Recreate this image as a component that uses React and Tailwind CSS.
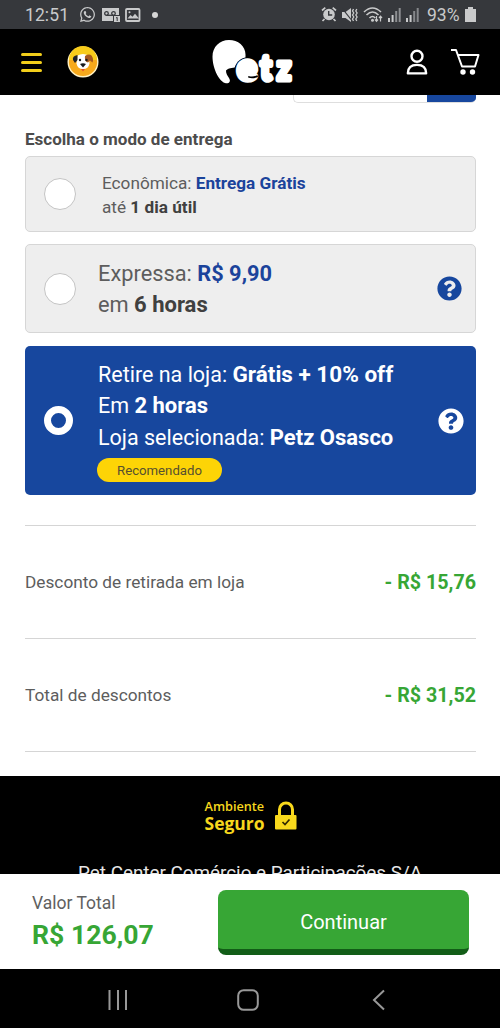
import React from 'react';
import { FaWhatsapp, FaQuestionCircle } from 'react-icons/fa';

function StatusBar() {
  return (
    <div className="flex h-[29px] shrink-0 items-center bg-[#36383c] pl-[25px] text-[#c9cacb]">
      <span className="w-[54px] pt-[2px] text-[17.5px] leading-[29px] tracking-[0.1px] whitespace-nowrap">12:51</span>
      <FaWhatsapp className="size-[17px]" />
      <svg className="ml-[6px] h-[16px] w-[18px]" viewBox="0 0 18 16">
        <path d="M0 1h17v7h-6v6H0z" fill="#c9cacb" />
        <g fill="none" stroke="#36383c" strokeWidth="1.3">
          <circle cx="4.5" cy="6.5" r="1.8" />
          <circle cx="11.5" cy="6.5" r="1.8" />
          <path d="M4.5 8.3h7" />
        </g>
        <rect x="12" y="9" width="6" height="6" fill="#c9cacb" />
        <path d="M14 11l1.2-.6V14" fill="none" stroke="#36383c" />
      </svg>
      <svg className="ml-[5px] h-[14px] w-[16px]" viewBox="0 0 16 14">
        <rect x="1" y="1" width="13.5" height="12" rx="1" fill="none" stroke="#c9cacb" strokeWidth="1.8" />
        <path d="M2.5 10.5l3-3.500 2 1.800 2.500-3 4 4.700z" fill="#c9cacb" />
        <circle cx="4.500" cy="4.300" r="1" fill="#c9cacb" />
      </svg>
      <span className="ml-[11px] size-[6px] rounded-full bg-[#d6d6d6]" />
      <svg className="ml-[163px] h-[17px] w-[16px]" viewBox="0 0 16 17">
        <circle cx="8" cy="8.500" r="5.800" fill="#c9cacb" />
        <path d="M1 4.500L4.300 1.700M15 4.500L11.700 1.700M3.500 13l-2 2M12.500 13l2 2" stroke="#c9cacb" strokeWidth="1.700" />
        <path d="M7.700 5v4h3.500" fill="none" stroke="#36383c" strokeWidth="1.400" />
      </svg>
      <svg className="ml-[5px] h-[16px] w-[16px]" viewBox="0 0 16 16">
        <path d="M0 5h3.500L9 1v14l-5.500-4H0z" fill="#c9cacb" />
        <path d="M0 1l11 14" stroke="#36383c" strokeWidth="1.200" />
        <path d="M11.500 2l-1 2 1.300 2-1.300 2 1.300 2-1.300 2 1 2M14.800 2l-1 2 1.300 2-1.300 2 1.300 2-1.300 2 1 2" fill="none" stroke="#c9cacb" strokeWidth="1.300" />
      </svg>
      <svg className="ml-[5px] h-[17px] w-[20px]" viewBox="0 0 20 17">
        <g fill="none" stroke="#c9cacb" strokeWidth="1.600">
          <path d="M1 6Q9.500-2 18 6M3.500 9Q9.500 3 15.500 9M6.500 12Q9.500 9 12.300 12" />
          <path d="M13.500 10v5M12 13.500l1.500 1.800 1.500-1.800M17.500 15.500v-5M16 12l1.500-1.800L19 12" strokeWidth="1.200" />
        </g>
        <circle cx="9.500" cy="14.300" r="1.500" fill="#c9cacb" />
      </svg>
      {[0, 1].map((signal) => (
        <svg key={signal} className="ml-[4px] h-[15px] w-[14px]" viewBox="0 0 14 15">
          <path d="M1 11h2v4H1zM4.600 8h2v7h-2z" fill="#c9cacb" />
          <path d="M8.200 4h2v11h-2zM11.700 1h2v14h-2z" fill={signal ? '#85878a' : '#8d8f92'} />
        </svg>
      ))}
      <span className="ml-[8px] w-[34px] pt-px text-[17.500px] leading-[30px] whitespace-nowrap">93%</span>
      <svg className="ml-[4px] h-[15px] w-[11px]" viewBox="0 0 11 15">
        <path d="M3 0h5v2h3v13H0V2h3z" fill="#c9cacb" />
      </svg>
    </div>
  );
}

function DogBadge() {
  return (
    <svg className="ml-[25px] size-[32px]" viewBox="0 0 32 32">
      <circle cx="16" cy="16" r="14.800" fill="#f7a91c" stroke="#fff2c4" strokeWidth="1.400" />
      <path d="M2 14a14 14 0 0128 0z" fill="#f8cc1a" />
      <path d="M10.500 9.500q5.500-3 11 0l1 8q-1 5.500-6.500 5.500t-6.500-5.500z" fill="#fff" />
      <path d="M10.500 9q-5.500 1-4.500 5l2 3 2.500-3z" fill="#20232a" />
      <path d="M18 10q4-2.500 6.500-.5 2.500 3.500 1 7l-2.500-2-2 2q-4-1-3-6.500z" fill="#a75a1e" />
      <circle cx="13" cy="14" r="1.200" fill="#17191d" />
      <circle cx="19.500" cy="14" r="1.200" fill="#17191d" />
      <path d="M13 18q3-1.500 6 0l-3 3.500z" fill="#17191d" />
      <path d="M14 23h4l-2 2.500z" fill="#e4532a" />
    </svg>
  );
}

function PetzLogo() {
  return (
    <svg className="h-[56px] w-[86px] overflow-visible" viewBox="0 -4 86 56">
      <path d="M18 2C27 2 34.500 8 34.500 16.500V27l-9 2.500c-5 .3-8 .5-10.500 3 0 3 1 4.500 3 7.500 2.500 4-.5 6-4 5C7 42.500 1.500 29 1.500 18.500 1.500 9 8.500 2 18 2z" fill="#fff" />
      <circle cx="37" cy="33" r="13.700" fill="#000" />
      <g fill="#fff" stroke="#fff" strokeLinejoin="round" strokeLinecap="round" fontFamily="Lato, sans-serif" fontWeight="900">
        <text x="27.500" y="41.300" strokeWidth="7.500" fontSize="33" textLength="17" lengthAdjust="spacingAndGlyphs">e</text>
        <text x="49.500" y="42" strokeWidth="5.500" fontSize="35" textLength="11" lengthAdjust="spacingAndGlyphs">t</text>
        <text x="66" y="42" strokeWidth="5" fontSize="34" textLength="14" lengthAdjust="spacingAndGlyphs">z</text>
      </g>
      <path d="M38 39q4 1 8-.7" fill="none" stroke="#000" strokeWidth="1.800" strokeLinecap="round" />
    </svg>
  );
}

function Header() {
  return (
    <header className="flex h-[66px] shrink-0 items-center bg-black pl-[21px]">
      <div className="flex w-[21px] flex-col gap-[5px]">
        <span className="h-[3px] rounded-xs bg-[#f2ce1b]" />
        <span className="h-[3px] rounded-xs bg-[#f2ce1b]" />
        <span className="h-[3px] rounded-xs bg-[#f2ce1b]" />
      </div>
      <DogBadge />
      <div className="ml-[112px]">
        <PetzLogo />
      </div>
      <svg className="mb-[1px] ml-[109px] h-[26px] w-[22px]" viewBox="0 0 22 27" fill="none" stroke="#fff" strokeWidth="2.500">
        <circle cx="11" cy="7.500" r="5.700" />
        <path d="M1.500 25.300q0-8.800 9.500-8.800t9.500 8.800z" strokeLinejoin="round" />
      </svg>
      <svg className="ml-[22px] h-[28px] w-[30px]" viewBox="0 0 30 28">
        <path d="M1 2h5l6 16.500h13L28.500 7H8" fill="none" stroke="#fff" strokeWidth="2" strokeLinejoin="round" />
        <circle cx="13" cy="24" r="2.700" fill="#fff" />
        <circle cx="22.500" cy="24" r="2.700" fill="#fff" />
      </svg>
    </header>
  );
}

function Radio() {
  return <span className="ml-[18px] size-[32px] shrink-0 rounded-full border border-[#c4c4c4] bg-white" />;
}

function DeliveryOptions() {
  return (
    <div className="flex flex-col">
      <div className="flex h-[76px] items-center rounded-[5px] border border-[#d6d6d6] bg-[#eeeeee]">
        <Radio />
        <div className="ml-[26px] pt-px text-[17.200px] leading-[24px] whitespace-nowrap text-[#5d5d5d]">
          <p>Econômica: <b className="text-[#1b439b]">Entrega Grátis</b></p>
          <p>até <b className="text-[#404040]">1 dia útil</b></p>
        </div>
      </div>
      <div className="mt-[12px] flex h-[89px] items-center rounded-[5px] border border-[#d6d6d6] bg-[#eeeeee]">
        <Radio />
        <div className="ml-[22px] flex-1 text-[21.800px] leading-[31px] whitespace-nowrap text-[#5d5d5d]">
          <p>Expressa: <b className="text-[#1b439b]">R$ 9,90</b></p>
          <p>em <b className="text-[22px] text-[#404040]">6 horas</b></p>
        </div>
        <FaQuestionCircle className="mr-[13px] size-[25px] text-[#17479e]" />
      </div>
      <div className="mt-[13px] flex h-[149px] items-center rounded-[5px] bg-[#17479e]">
        <span className="ml-[19px] size-[29px] shrink-0 rounded-full border-[7px] border-white" />
        <div className="ml-[25px] flex-1 text-[21.500px] leading-[31.500px] whitespace-nowrap text-white">
          <p className="h-[31.500px]">Retire na loja: <b className="text-[22.500px]">Grátis + 10% off</b></p>
          <p className="h-[31.500px]">Em <b className="text-[22px]">2 horas</b></p>
          <p className="h-[31.500px]">Loja selecionada: <b className="text-[22px]">Petz Osasco</b></p>
          <span className="mt-[5px] -ml-px flex h-[24px] w-[125px] items-center justify-center rounded-full bg-[#fdd406] text-[13.200px] leading-none text-[#56502f]">
            Recomendado
          </span>
        </div>
        <FaQuestionCircle className="mr-[12px] size-[26px] text-white" />
      </div>
    </div>
  );
}

function DiscountRow({ label, value }) {
  return (
    <div className="flex h-[113px] items-center justify-between border-t border-[#d5d5d5] pt-[2px] whitespace-nowrap">
      <span className="text-[17.250px]">{label}</span>
      <b className="text-[19.700px] text-[#37a635]">{value}</b>
    </div>
  );
}

export default function App() {
  return (
    <div className="flex h-[1028px] w-[500px] flex-col overflow-hidden bg-white font-['Roboto',sans-serif]">
      <StatusBar />
      <Header />
      <main className="h-[681px] shrink-0 pr-[24px] pl-[25px] text-[#5d5d5d]">
        <div className="ml-[268px] flex h-[8px] overflow-hidden rounded-b-[5px] border-b border-l border-[#dedede]">
          <span className="flex-1" />
          <span className="-mb-px w-[49px] bg-[#17479e]" />
        </div>
        <h2 className="mt-[24px] mb-[5px] text-[17.050px] leading-[24px] font-bold whitespace-nowrap text-[#4c4c4c]">
          Escolha o modo de entrega
        </h2>
        <DeliveryOptions />
        <div className="mt-[30px] border-b border-[#d5d5d5]">
          <DiscountRow label="Desconto de retirada em loja" value="- R$ 15,76" />
          <DiscountRow label="Total de descontos" value="- R$ 31,52" />
        </div>
      </main>
      <footer className="h-[98px] shrink-0 overflow-hidden bg-black pt-[22px]">
        <div className="flex h-[36px] justify-center gap-[9px] pl-px">
          <div className="w-[61px] font-['Open_Sans',sans-serif] whitespace-nowrap text-[#f7d71d]">
            <p className="text-[12.700px] leading-[17px] font-semibold">Ambiente</p>
            <p className="text-[17.500px] leading-[16px] font-bold">Seguro</p>
          </div>
          <svg className="mt-[3px] h-[29px] w-[22px]" viewBox="0 0 22 29">
            <path d="M4.500 15V8.500a6.500 6.500 0 0113 0V15" fill="none" stroke="#f9d91c" strokeWidth="3" />
            <rect x="0" y="14" width="21.500" height="14.500" rx="1" fill="#f9d91c" />
            <path d="M7.500 21l2.500 2.500 4.500-5" fill="none" stroke="#302800" strokeWidth="1.700" />
          </svg>
        </div>
        <p className="mt-[27px] text-center text-[18.850px] leading-[24px] whitespace-nowrap text-[#e8e8e8]">
          Pet Center Comércio e Participações S/A
        </p>
      </footer>
      <section className="flex h-[95px] shrink-0 bg-white pt-[16px] pl-[32px]">
        <div className="w-[186px] whitespace-nowrap">
          <p className="text-[17.500px] leading-[26px] text-[#606060]">Valor Total</p>
          <p className="mt-[3px] text-[26.600px] leading-[32px] font-bold text-[#37a635]">R$ 126,07</p>
        </div>
        <button className="h-[65px] w-[251px] rounded-[8px] border-b-[6px] border-[#125d17] bg-[#37a635] pt-[5px] text-[20px] text-white">
          Continuar
        </button>
      </section>
      <nav className="flex h-[59px] shrink-0 items-start bg-black pt-[20px] pl-[108px]">
        <svg className="h-[22px] w-[20px]" viewBox="0 0 20 22" stroke="#989898" strokeWidth="2">
          <path d="M1.500 1v20M10 1v20M18 1v20" />
        </svg>
        <svg className="ml-[109px] size-[22px]" viewBox="0 0 22 22">
          <rect x="1.200" y="1.200" width="19.600" height="19.600" rx="5.500" fill="none" stroke="#989898" strokeWidth="2" />
        </svg>
        <svg className="ml-[113px] h-[22px] w-[13px]" viewBox="0 0 13 22">
          <path d="M12 1.500L2 11l10 9.500" fill="none" stroke="#989898" strokeWidth="2" />
        </svg>
      </nav>
    </div>
  );
}
